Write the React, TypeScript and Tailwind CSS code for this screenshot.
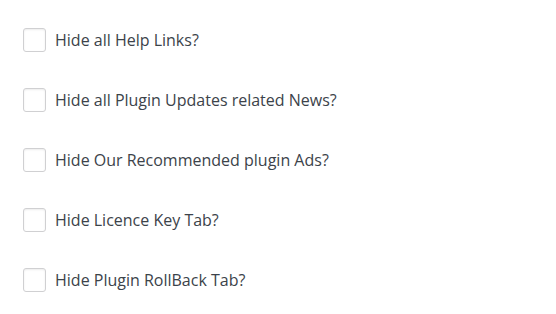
import React from "react";

const items = [
  "Hide all Help Links?",
  "Hide all Plugin Updates related News?",
  "Hide Our Recommended plugin Ads?",
  "Hide Licence Key Tab?",
  "Hide Plugin RollBack Tab?",
];

export default function App() {
  return (
    <div className="w-[556px] h-[314px] bg-white pl-[23px] pt-[28px] flex flex-col gap-[36px]" style={{ fontFamily: '"Open Sans", "Noto Sans", sans-serif' }}>
      {items.map((t) => (
        <label key={t} className="flex items-center h-[24px] gap-[9px]">
          <span className="w-[23px] h-[24px] rounded-[3px] border border-[#d0d0d2] bg-white shadow-[inset_0_1px_2px_rgba(0,0,0,0.08)] shrink-0" />
          <span className="text-[16px] text-[#3c434a] leading-[24px]">{t}</span>
        </label>
      ))}
    </div>
  );
}
